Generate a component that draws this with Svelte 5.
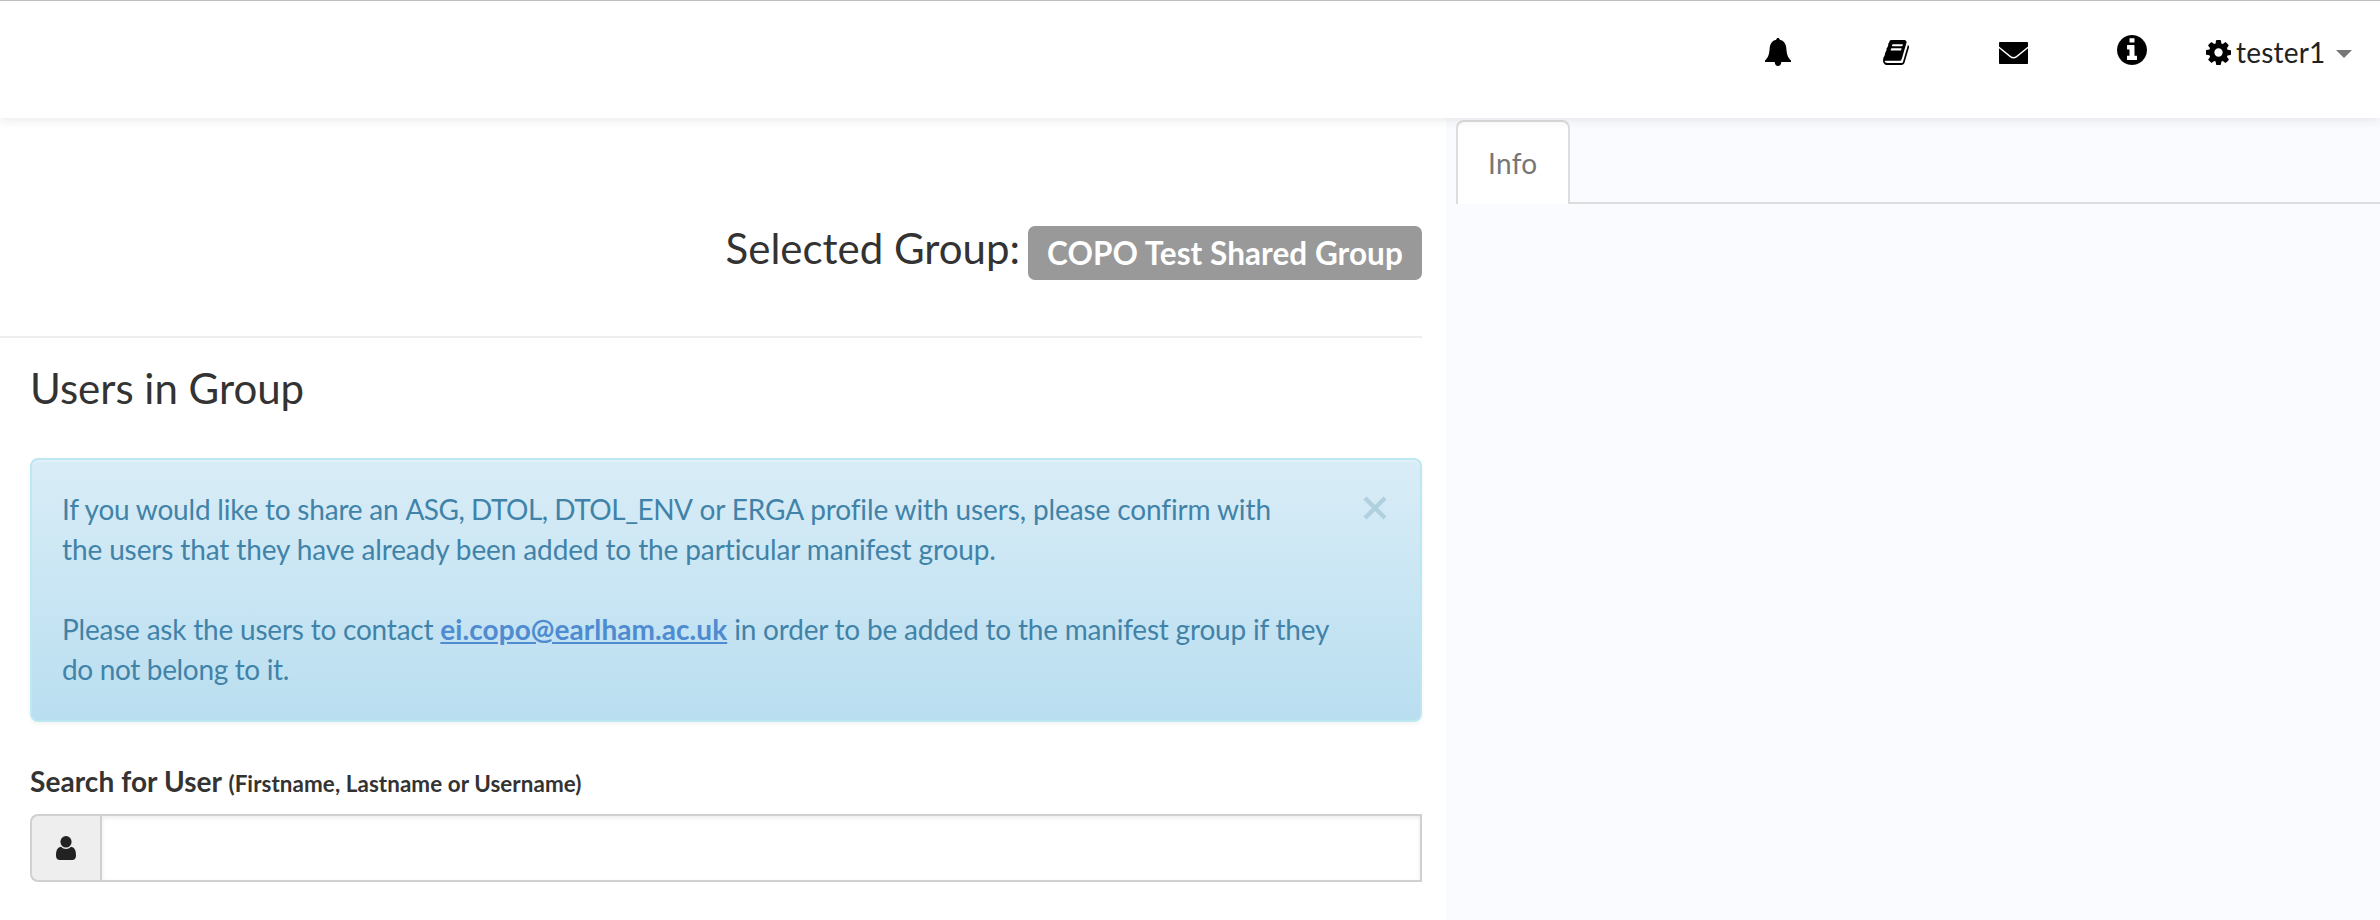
<script>
  const groupName = 'COPO Test Shared Group';
  const username = 'tester1';
  let query = $state('');
</script>

<div class="page">
  <header>
    <nav>
      <svg class="bell" viewBox="0 0 26 28"><path d="M13 0c.9 0 1.600.6 1.800 1.700C19 2.600 21 6 21.300 10c.4 5.700 1.200 9.500 4.700 12.500V24H16.300c-.2 2.500-1.400 4-3.300 4s-3.100-1.500-3.300-4H0v-1.500C3.500 19.500 4.300 15.700 4.700 10 5 6 7 2.600 11.200 1.700 11.400.6 12.100 0 13 0z" /></svg>
      <svg class="book" viewBox="64 128 1664 1536" preserveAspectRatio="none"><path d="M1703 478q40 57 18 129l-275 906q-19 64-76.500 107.500t-122.500 43.500h-923q-77 0-148.500-53.500t-99.500-131.500q-24-67-2-127 0-4 3-27t4-37q1-8-3-21.500t-3-19.500q2-11 8-21t16.500-23.500 16.500-23.500q23-38 45-91.500t30-91.500q3-10 .5-30t-.5-28q3-11 17-28t17-23q21-36 42-92t25-90q1-9-2.500-32t.5-28q4-13 22-30.500t22-22.500q19-26 42.500-84.500t27.500-96.500q1-8-3-25.500t-2-26.500q2-8 9-18t18-23 17-21q8-12 16.500-30.500t15-35 16-36 19.500-32 26.500-23.500 36-11.500 47.500 5.500l-1 3q38-9 51-9h761q74 0 114 56t18 130l-274 906q-36 119-71.500 153.500t-128.500 34.500h-869q-27 0-38 15-11 16-1 43 24 70 144 70h923q29 0 56-15.500t35-41.500l300-987q7-22 5-57 38 15 59 43zm-1064 2q-4 13 2 22.500t20 9.500h608q13 0 25.500-9.500t16.500-22.500l21-64q4-13-2-22.500t-20-9.500h-608q-13 0-25.500 9.500t-16.500 22.500zm-83 256q-4 13 2 22.500t20 9.500h608q13 0 25.500-9.500t16.500-22.500l21-64q4-13-2-22.500t-20-9.500h-608q-13 0-25.500 9.500t-16.500 22.500z" /></svg>
      <svg class="mail" viewBox="0 0 28 22" preserveAspectRatio="none"><path d="M.8 0h26.400q.8 0 .8.800v3.700L16.300 14.200q-2.300 1.600-4.600 0L0 4.500V.8Q0 0 .8 0zM0 6.300l10.600 9q3.400 2.500 6.800 0L28 6.300v14.900q0 .8-.8.800H.8q-.8 0-.8-.8z" /></svg>
      <svg class="info" viewBox="128 128 1536 1536"><path d="M1152 1376v-160q0-14-9-23t-23-9h-96v-512q0-14-9-23t-23-9h-320q-14 0-23 9t-9 23v160q0 14 9 23t23 9h96v320h-96q-14 0-23 9t-9 23v160q0 14 9 23t23 9h448q14 0 23-9t9-23zm-128-896v-160q0-14-9-23t-23-9h-192q-14 0-23 9t-9 23v160q0 14 9 23t23 9h192q14 0 23-9t9-23zm640 416q0 209-103 385.500t-279.500 279.500-385.500 103-385.500-103-279.500-279.500-103-385.500 103-385.500 279.500-279.500 385.500-103 385.500 103 279.500 279.500 103 385.500z" /></svg>
      <div class="account">
        <svg class="cog" viewBox="128 128 1536 1536"><path d="M1152 896q0-106-75-181t-181-75-181 75-75 181 75 181 181 75 181-75 75-181zm512-109v222q0 12-8 23t-20 13l-185 28q-19 54-39 91 35 50 107 138 10 12 10 25t-9 23q-27 37-99 108t-94 71q-12 0-26-9l-138-108q-44 23-91 38-16 136-29 186-7 28-36 28h-222q-14 0-24.500-8.500t-11.500-21.500l-28-184q-49-16-90-37l-141 107q-10 9-25 9-14 0-25-11-126-114-165-168-7-10-7-23 0-12 8-23 15-21 51-66.500t54-70.500q-27-50-41-99l-183-27q-13-2-21-12.500t-8-23.500v-222q0-12 8-23t19-13l186-28q14-46 39-92-40-57-107-138-10-12-10-24 0-10 9-23 26-36 98.500-107.500t94.500-71.500q13 0 26 10l138 107q44-23 91-38 16-136 29-186 7-28 36-28h222q14 0 24.500 8.500t11.500 21.500l28 184q49 16 90 37l142-107q9-9 24-9 13 0 25 10 129 119 165 170 7 8 7 22 0 12-8 23-15 21-51 66.500t-54 70.500q26 50 41 98l183 28q13 2 21 12.500t8 23.500z" /></svg>
        <span class="name">{username}</span>
        <span class="caret"></span>
      </div>
    </nav>
  </header>

  <div class="body">
    <main>
      <div class="selected">
        <h2>Selected Group:</h2>
        <span class="badge">{groupName}</span>
      </div>
      <section>
        <h2>Users in Group</h2>
        <div class="alert">
          <p>If you would like to share an <span class="codes">ASG, DTOL, DTOL_ENV</span> <span class="loose">or ERGA profile with users, please confirm with</span><br /><span class="loose">the users that they have already been added to the particular manifest group.</span></p>
          <p>Please ask the users to contact <a href="mailto:ei.copo@earlham.ac.uk">ei.copo@earlham.ac.uk</a> in order to be added to the manifest group if they<br /><span class="last">do not belong to it.</span></p>
          <button class="close" aria-label="Close"><svg viewBox="0 0 24 24"><path d="M2 2l20 20M22 2L2 22" /></svg></button>
        </div>
        <label for="user-search">Search for User <small>(Firstname, Lastname or Username)</small></label>
        <div class="field">
          <span class="addon"><svg viewBox="0 0 20 24"><ellipse cx="10" cy="5.800" rx="5.600" ry="5.800" /><path d="M4.800 10.700Q10 15.300 15.200 10.700C19 11.600 20 15 20 19.500c0 3-1.500 4.500-4 4.500H4c-2.500 0-4-1.500-4-4.500 0-4.500 1-7.900 4.800-8.800z" /></svg></span>
          <input id="user-search" type="text" bind:value={query} />
        </div>
      </section>
    </main>
    <aside>
      <div class="tabs"><div class="tab">Info</div><div class="rest"></div></div>
    </aside>
  </div>
</div>

<style>
  :global(body) { margin: 0; background: #fff; }
  .page { width: 2380px; height: 920px; overflow: hidden; box-sizing: border-box; display: flex; flex-direction: column; font-family: Lato, sans-serif; font-size: 28px; line-height: 40px; color: #333; }
  header { position: relative; z-index: 1; flex: none; height: 118px; box-sizing: border-box; border-top: 1px solid #bfbfbf; background: #fff; box-shadow: 0 2px 10px rgba(34, 36, 38, .1); }
  nav { display: flex; justify-content: flex-end; align-items: flex-start; padding-right: 28px; fill: #000; }
  nav svg { display: block; flex: none; }
  .bell { width: 26px; height: 28px; margin: 37px 92px 0 0; }
  .book { width: 26px; height: 25px; margin: 39px 90px 0 0; }
  .mail { width: 29px; height: 22px; margin: 41px 89px 0 0; }
  .info { width: 30px; height: 30px; margin: 34px 59px 0 0; }
  .account { display: flex; align-items: center; height: 40px; margin-top: 31px; }
  .cog { width: 25px; height: 25px; margin-right: 5px; }
  .name { width: 100px; margin-top: -1px; color: #222; letter-spacing: .2px; }
  .caret { border: 8px solid transparent; border-top-color: #777; border-bottom: 0; margin-top: 3px; }
  .body { flex: 1; display: flex; }
  main { width: 1446px; box-sizing: border-box; padding-right: 24px; }
  h2 { margin: 0; font-size: 42px; line-height: 46px; font-weight: 400; }
  .selected { display: flex; justify-content: flex-end; height: 218px; border-bottom: 2px solid #eee; gap: 8px; }
  .selected h2 { margin-top: 107px; }
  .badge { box-sizing: border-box; width: 394px; height: 54px; margin-top: 108px; padding: 0 0 0 19px; border-radius: 7px; background: #999; color: #fff; font-size: 31.500px; line-height: 54px; font-weight: 700; letter-spacing: .05px; white-space: nowrap; }
  section { padding: 27px 0 0 30px; }
  .alert { position: relative; box-sizing: border-box; height: 264px; margin-top: 47px; padding: 29px 30px; border: 2px solid #bce8f1; border-radius: 8px; background: linear-gradient(#d9edf7, #b9def0); box-shadow: inset 0 2px 0 rgba(255,255,255,.25), 0 2px 4px rgba(0,0,0,.05); color: #4183a8; letter-spacing: -.21px; white-space: nowrap; }
  .alert p { margin: 0 0 40px; }
  .alert a { color: #4f8bd0; font-weight: 700; letter-spacing: .07px; text-decoration: underline; }
  .codes { letter-spacing: -.5px; }
  .loose { letter-spacing: -.12px; }
  .last { letter-spacing: -.34px; }
  .close { position: absolute; top: 36px; right: 33px; padding: 0; border: 0; background: none; }
  .close svg { display: block; width: 24px; height: 24px; fill: none; stroke: #b0d0df; stroke-width: 4.300; }
  label { display: block; height: 40px; margin-top: 39px; font-weight: 700; letter-spacing: .08px; }
  small { font-size: 22.400px; }
  .field { display: flex; height: 68px; margin-top: 13px; }
  .addon { box-sizing: border-box; width: 70px; border: 2px solid #d0d0d0; border-right: 0; border-radius: 8px 0 0 8px; background: #eee; display: flex; align-items: center; justify-content: center; }
  .addon svg { width: 20px; height: 24px; fill: #222; }
  input { flex: 1; min-width: 0; box-sizing: border-box; padding: 0 24px; border: 2px solid #d0d0d0; border-radius: 0; outline: 0; background: #fff; box-shadow: inset 0 2px 4px rgba(0,0,0,.08); font: inherit; }
  aside { flex: 1; background: #fafbff; padding: 2px 0 0 10px; }
  .tabs { display: flex; height: 84px; }
  .tab { box-sizing: border-box; width: 114px; padding: 21px 0 0 30px; border: 2px solid #ddd; border-bottom: 0; border-radius: 8px 8px 0 0; background: #fff; color: #777; letter-spacing: .3px; }
  .rest { flex: 1; border-bottom: 2px solid #ddd; }
</style>
